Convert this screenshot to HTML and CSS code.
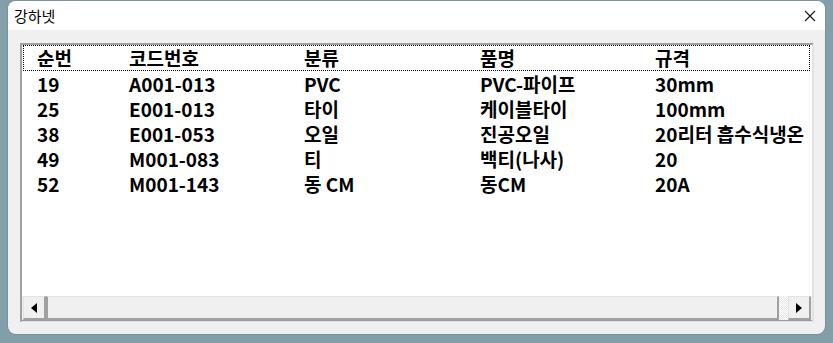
FILE: index.html
```html
<!DOCTYPE html>
<html>
<head>
    <title>강하넷</title>
    <meta charset="UTF-8">
    <link rel="stylesheet" href="styles.css">
</head>
<body>
    <div class="window">
        <div class="titlebar">
            <span class="title">강하넷</span>
            <span class="close">
                <svg width="12" height="12" viewBox="0 0 12 12">
                    <path d="M1 1 L11 11 M11 1 L1 11" stroke="#1a1a1a" stroke-width="1.2" fill="none"/>
                </svg>
            </span>
        </div>

        <div class="client">
            <div class="listbox">
                <div class="rows">
                    <div class="row header">
                        <span>순번</span><span>코드번호</span><span>분류</span><span>품명</span><span>규격</span>
                    </div>
                    <div class="row">
                        <span>19</span><span>A001-013</span><span>PVC</span><span>PVC-파이프</span><span>30mm</span>
                    </div>
                    <div class="row">
                        <span>25</span><span>E001-013</span><span>타이</span><span>케이블타이</span><span>100mm</span>
                    </div>
                    <div class="row">
                        <span>38</span><span>E001-053</span><span>오일</span><span>진공오일</span><span>20리터 흡수식냉온</span>
                    </div>
                    <div class="row">
                        <span>49</span><span>M001-083</span><span>티</span><span>백티(나사)</span><span>20</span>
                    </div>
                    <div class="row">
                        <span>52</span><span>M001-143</span><span>동 CM</span><span>동CM</span><span>20A</span>
                    </div>
                </div>

                <div class="hscroll">
                    <div class="sbtn">
                        <svg width="6" height="10" viewBox="0 0 6 10"><path d="M6 0 L0 5 L6 10 Z" fill="#000"/></svg>
                    </div>
                    <div class="thumb"></div>
                    <div class="track"></div>
                    <div class="sbtn">
                        <svg width="6" height="10" viewBox="0 0 6 10"><path d="M0 0 L6 5 L0 10 Z" fill="#000"/></svg>
                    </div>
                </div>
            </div>
        </div>
    </div>
</body>
</html>
```

FILE: styles.css
```css
body {
    margin: 0;
    padding: 1px 8px 9px 8px;
    background: #819ea9;
    font-family: "Noto Sans CJK KR", "Noto Sans", sans-serif;
}
.window {
    width: 817px;
    height: 333px;
    background: #f0f0f0;
    border-radius: 8px;
    overflow: hidden;
    display: flex;
    flex-direction: column;
    box-shadow: 0 0 0 1px rgba(110, 130, 140, 0.4);
}
.titlebar {
    height: 29px;
    background: #ffffff;
    display: flex;
    align-items: center;
    justify-content: space-between;
    padding: 0 9px 0 6px;
}
.title {
    font-size: 15px;
    color: #000;
    line-height: 29px;
}
.close {
    display: flex;
    align-items: center;
}
.client {
    flex: 1;
    padding: 13px 11px 12px 12px;
}
.listbox {
    height: 100%;
    box-sizing: border-box;
    background: #ffffff;
    border-top: 2px solid #a0a0a0;
    border-left: 2px solid #a0a0a0;
    border-right: 2px solid #e3e3e3;
    border-bottom: 1px solid #e3e3e3;
    display: flex;
    flex-direction: column;
}
.rows {
    flex: 1;
    overflow: hidden;
    padding: 0 2px 0 1px;
}
.row {
    display: grid;
    grid-template-columns: 92px 175px 176px 175px 1fr;
    padding-left: 14px;
    height: 25px;
    line-height: 25px;
    font-size: 19px;
    font-weight: bold;
    color: #000;
    white-space: nowrap;
}
.header {
    height: 24px;
    line-height: 24px;
    border: 1px dotted #000;
    padding-left: 13px;
}
.hscroll {
    height: 24px;
    display: flex;
    background: #f0f0f0;
    padding: 0 1px;
    border-bottom: 1px solid #9a9a9a;
}
.sbtn {
    width: 23px;
    box-sizing: border-box;
    display: flex;
    align-items: center;
    justify-content: center;
    background: #f0f0f0;
    border-top: 1px solid #e3e3e3;
    border-left: 1px solid #e3e3e3;
    border-right: 2px solid #a0a0a0;
    border-bottom: 2px solid #a0a0a0;
}
.thumb {
    flex: 1;
    box-sizing: border-box;
    background: #f0f0f0;
    border-top: 1px solid #e3e3e3;
    border-left: 2px solid #a0a0a0;
    border-right: 2px solid #a0a0a0;
    border-bottom: 2px solid #a0a0a0;
}
.track {
    width: 9px;
    background: repeating-conic-gradient(#ffffff 0 25%, #e6e6e6 0 50%) 0 0 / 2px 2px;
}
```
